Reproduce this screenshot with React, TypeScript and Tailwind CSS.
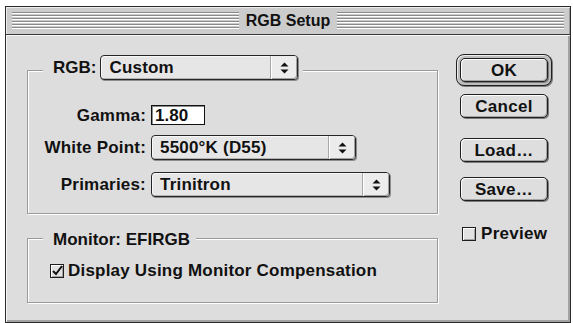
import React from 'react';

// Platinum-style "RGB Setup" dialog

function Stripes() {
  return (
    <div className="flex-1 flex flex-col gap-[1px]">
      {[0, 1, 2, 3, 4, 5].map((i) => (
        <div key={i} className="flex flex-col">
          <div className="h-[1px] bg-[#8a8a8a]" />
          <div className="h-[1px] bg-[#ffffff]" />
        </div>
      ))}
    </div>
  );
}

function Arrows() {
  return (
    <svg width="9" height="12" viewBox="0 0 9 12">
      <polygon points="4.5,0.5 8.5,4.5 0.5,4.5" fill="#111" />
      <polygon points="0.5,7.5 8.5,7.5 4.5,11.5" fill="#111" />
    </svg>
  );
}

function Popup({ value, width }: { value: string; width: string }) {
  return (
    <div
      className={`${width} h-[25px] flex rounded-[4px] border border-[#262626] bg-[#e6e6e6] shadow-[1px_1px_0_#8c8c8c,inset_1px_1px_0_#f8f8f8,inset_-1px_-1px_0_#b4b4b4]`}
    >
      <div className="flex-1 flex items-center pl-[8px] text-[17px] tracking-[0.2px] leading-none">{value}</div>
      <div className="w-[27px] flex items-center justify-center border-l border-[#a8a8a8] bg-[#ececec] rounded-r-[3px] shadow-[inset_1px_0_0_#ffffff,inset_-1px_-1px_0_#a0a0a0]">
        <Arrows />
      </div>
    </div>
  );
}

function Button({ label }: { label: string }) {
  return (
    <div className="w-[88px] h-[24px] flex items-center justify-center rounded-[5px] border border-[#202020] bg-[#dedede] shadow-[1px_1px_0_#7c7c7c,inset_1px_1px_0_#ffffff,inset_-1px_-1px_0_#a6a6a6] text-[17px] tracking-[0.3px] leading-none">
      {label}
    </div>
  );
}

function CheckBox({ checked }: { checked: boolean }) {
  return (
    <div className="w-[14px] h-[14px] border border-[#1e1e1e] bg-[#e2e2e2] shadow-[inset_1px_1px_0_#ffffff,inset_-1px_-1px_0_#a4a4a4] flex items-center justify-center">
      {checked && (
        <svg width="12" height="12" viewBox="0 0 12 12">
          <path d="M2 6 L5 9 L11 1" stroke="#111" strokeWidth="2" fill="none" />
        </svg>
      )}
    </div>
  );
}

export default function App() {
  return (
    <div className="w-[573px] h-[323px] bg-white font-['Liberation_Sans',sans-serif] font-bold text-[#111] pt-[6px] pl-[5px]">
      <div className="w-[566px] h-[317px] border border-[#2a2a2a] bg-[#dddddd] flex flex-col">
        {/* Title bar */}
        <div className="h-[28px] flex items-center gap-[7px] px-[6px] bg-[#cccccc] border-b border-[#3a3a3a] shadow-[inset_1px_1px_0_#eeeeee,inset_-1px_0_0_#999999]">
          <Stripes />
          <div className="text-[16px] leading-none">RGB Setup</div>
          <Stripes />
        </div>

        {/* Body */}
        <div className="flex-1 flex pl-[21px] shadow-[inset_1px_1px_0_#f6f6f6,inset_-2px_-2px_0_#a2a2a2]">
          {/* Left column */}
          <div className="w-[411px] flex flex-col pt-[35px]">
            <div className="h-[144px] border border-[#9a9a9a] shadow-[1px_1px_0_#ffffff,inset_1px_1px_0_#ffffff] flex flex-col">
              <div className="-mt-[16px] flex pl-[15px]">
                <div className="flex items-center gap-[4px] bg-[#dddddd] pl-[10px] pr-[5px]">
                  <span className="text-[17px] leading-none whitespace-nowrap">RGB:</span>
                  <Popup value="Custom" width="w-[198px]" />
                </div>
              </div>

              <div className="mt-[25px] flex items-center">
                <span className="w-[118px] text-right text-[17px] tracking-[0.2px] leading-none">Gamma:</span>
                <div className="ml-[5px] w-[54px] h-[20px] border border-[#111] bg-white flex items-center pl-[3px] text-[17px] leading-none shadow-[inset_1px_1px_0_#8c8c8c]">
                  1.80
                </div>
              </div>

              <div className="mt-[10px] flex items-center">
                <span className="w-[118px] text-right text-[17px] tracking-[0.2px] leading-none">White Point:</span>
                <div className="ml-[5px]">
                  <Popup value="5500°K (D55)" width="w-[205px]" />
                </div>
              </div>

              <div className="mt-[12px] flex items-center">
                <span className="w-[118px] text-right text-[17px] tracking-[0.2px] leading-none">Primaries:</span>
                <div className="ml-[5px]">
                  <Popup value="Trinitron" width="w-[239px]" />
                </div>
              </div>
            </div>

            <div className="mt-[24px] h-[65px] border border-[#9a9a9a] shadow-[1px_1px_0_#ffffff,inset_1px_1px_0_#ffffff] flex flex-col">
              <div className="-mt-[10px] flex pl-[15px]">
                <div className="h-[20px] flex items-center bg-[#dddddd] pl-[10px] pr-[6px] text-[17px] leading-none">
                  Monitor: EFIRGB
                </div>
              </div>
              <div className="mt-[13px] pl-[22px] flex items-center gap-[4px]">
                <CheckBox checked />
                <span className="text-[17px] tracking-[0.2px] leading-none">Display Using Monitor Compensation</span>
              </div>
            </div>
          </div>

          {/* Right column */}
          <div className="ml-[18px] w-[96px] flex flex-col items-center pt-[19px]">
            <div className="w-[96px] h-[32px] rounded-[8px] border border-[#202020] bg-[#bdbdbd] shadow-[1px_1px_0_#7c7c7c,inset_1px_1px_0_#ececec] flex items-center justify-center">
              <Button label="OK" />
            </div>
            <div className="mt-[8px]">
              <Button label="Cancel" />
            </div>
            <div className="mt-[20px]">
              <Button label="Load…" />
            </div>
            <div className="mt-[15px]">
              <Button label="Save…" />
            </div>
            <div className="mt-[24px] self-start pl-[6px] flex items-center gap-[5px]">
              <CheckBox checked={false} />
              <span className="text-[17px] tracking-[0.3px] leading-none">Preview</span>
            </div>
          </div>
        </div>
      </div>
    </div>
  );
}
